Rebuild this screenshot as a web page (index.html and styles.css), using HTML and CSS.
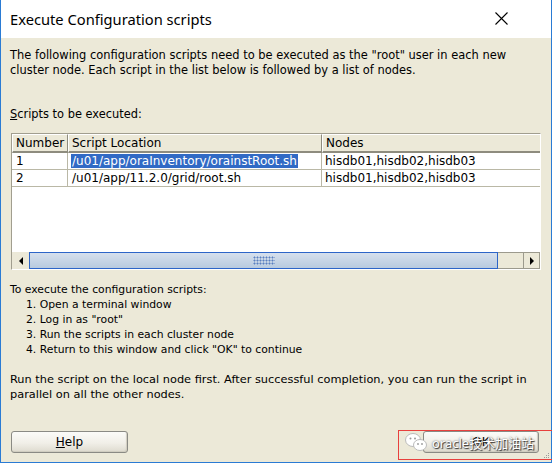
FILE: index.html
```html
<!DOCTYPE html>
<html>
<head>
<meta charset="utf-8">
<link rel="stylesheet" href="styles.css">
</head>
<body>
<div class="window">
  <div class="titlebar">
    <span class="title">Execute Configuration scripts</span>
    <svg class="close" width="13" height="13" viewBox="0 0 13 13"><path d="M0.5 0.5 L12.5 12.5 M12.5 0.5 L0.5 12.5" stroke="#000" stroke-width="1.1" fill="none"/></svg>
  </div>
  <div class="content">
    <p class="intro">The following configuration scripts need to be executed as the "root" user in each new<br>cluster node. Each script in the list below is followed by a list of nodes.</p>
    <div class="label"><u>S</u>cripts to be executed:</div>
    <div class="frame">
      <div class="grid header">
        <div class="hcell">Number</div>
        <div class="hcell">Script Location</div>
        <div class="hcell last">Nodes</div>
      </div>
      <div class="grid row">
        <div class="cell">1</div>
        <div class="cell loc"><span class="sel">/u01/app/oraInventory/orainstRoot.sh</span></div>
        <div class="cell last">hisdb01,hisdb02,hisdb03</div>
      </div>
      <div class="grid row">
        <div class="cell">2</div>
        <div class="cell loc"><span class="plain">/u01/app/11.2.0/grid/root.sh</span></div>
        <div class="cell last">hisdb01,hisdb02,hisdb03</div>
      </div>
      <div class="empty"></div>
      <div class="hscroll">
        <div class="sbtn"><span class="arrow-left"></span></div>
        <div class="thumb"><span class="grip"></span></div>
        <div class="track"></div>
        <div class="sbtn right"><span class="arrow-right"></span></div>
      </div>
    </div>
    <div class="steps">
      <div>To execute the configuration scripts:</div>
      <div class="item">1. Open a terminal window</div>
      <div class="item">2. Log in as "root"</div>
      <div class="item">3. Run the scripts in each cluster node</div>
      <div class="item">4. Return to this window and click "OK" to continue</div>
    </div>
    <p class="note">Run the script on the local node first. After successful completion, you can run the script in<br>parallel on all the other nodes.</p>
    <div class="buttons">
      <button class="btn"><u>H</u>elp</button>
      <button class="btn ok">OK</button>
    </div>
  </div>
  <svg class="resize" width="8" height="8" viewBox="0 0 8 8">
    <rect x="6" y="0" width="1" height="1" fill="#9a9a9a"/>
    <rect x="4" y="2" width="1" height="1" fill="#9a9a9a"/>
    <rect x="6" y="2" width="1" height="1" fill="#9a9a9a"/>
    <rect x="2" y="4" width="1" height="1" fill="#9a9a9a"/>
    <rect x="4" y="4" width="1" height="1" fill="#9a9a9a"/>
    <rect x="6" y="4" width="1" height="1" fill="#9a9a9a"/>
    <rect x="0" y="6" width="1" height="1" fill="#9a9a9a"/>
    <rect x="2" y="6" width="1" height="1" fill="#9a9a9a"/>
    <rect x="4" y="6" width="1" height="1" fill="#9a9a9a"/>
    <rect x="6" y="6" width="1" height="1" fill="#9a9a9a"/>
  </svg>
</div>
<div class="watermark">
  <svg class="wechat" width="24" height="20" viewBox="0 0 24 20">
    <ellipse cx="9" cy="8" rx="7.5" ry="6.5" fill="#fff" stroke="#bbb" stroke-width="1"/>
    <circle cx="6.5" cy="6.5" r="1" fill="#999"/>
    <circle cx="11" cy="6.5" r="1" fill="#999"/>
    <ellipse cx="16" cy="13" rx="6.5" ry="5.5" fill="#fff" stroke="#bbb" stroke-width="1"/>
    <circle cx="14" cy="12" r="0.9" fill="#999"/>
    <circle cx="18" cy="12" r="0.9" fill="#999"/>
  </svg>
  <span class="wm-text">oracle技术加油站</span>
</div>
</body>
</html>
```
FILE: styles.css
```css
* { box-sizing: border-box; }
html, body { margin: 0; padding: 0; }
body {
  width: 552px;
  height: 464px;
  overflow: hidden;
  background: #ffffff;
  font-family: "DejaVu Sans", sans-serif;
  color: #000;
  position: relative;
}
.window {
  width: 552px;
  height: 463px;
  border: 1px solid #2a7bd4;
  border-top: none;
  background: #ece9d8;
  display: flex;
  flex-direction: column;
  position: relative;
}
.titlebar {
  height: 38px;
  flex: none;
  background: #fff;
  display: flex;
  align-items: center;
  justify-content: space-between;
  padding: 0 43px 1px 9px;
}
.title {
  font-family: "Noto Sans", sans-serif;
  font-size: 14.7px;
  color: #000;
}
.close { display: block; }
.content {
  flex: 1;
  display: flex;
  flex-direction: column;
  padding: 10px 9px 0 9px;
  font-size: 11px;
  line-height: 15px;
}
.intro { margin: 0; font-size: 11.45px; }
.label { margin-top: 29px; font-size: 11.4px; }
.frame {
  margin-top: 11px;
  margin-left: 1px;
  width: 530px;
  height: 137px;
  border-top: 1px solid #a19e8f;
  border-left: 1px solid #a19e8f;
  border-right: 1px solid #fff;
  border-bottom: 1px solid #fff;
  background: #fff;
  display: flex;
  flex-direction: column;
  font-size: 12px;
}
.grid {
  display: grid;
  grid-template-columns: 56px 254px 218px;
  flex: none;
}
.header { height: 19px; background: #ece9d8; }
.hcell {
  border-top: 1px solid #fff;
  border-left: 1px solid #fff;
  border-right: 1px solid #8e8c7e;
  border-bottom: 2px solid #8e8c7e;
  padding: 1px 0 0 3px;
  line-height: 15px;
  white-space: nowrap;
  overflow: hidden;
}
.hcell.last { border-right: none; }
.row { height: 17px; }
.cell {
  border-right: 1px solid #bab8a6;
  border-bottom: 1px solid #bab8a6;
  padding: 1px 0 0 4px;
  line-height: 15px;
  white-space: nowrap;
  overflow: hidden;
}
.cell.loc { padding-left: 3px; }
.cell.last { border-right: none; padding-left: 3px; }
.sel { background: #316ac5; color: #fff; padding: 0 1px; }
.plain { padding: 0 1px; }
.empty { flex: 1; background: #fff; }
.hscroll {
  height: 17px;
  flex: none;
  display: flex;
  background: #ece9d8;
}
.sbtn {
  width: 17px;
  flex: none;
  background: #ece9d8;
  display: flex;
  align-items: center;
  justify-content: center;
}
.sbtn.right { border: 1px solid #9c9a8d; }
.arrow-left {
  width: 0; height: 0;
  border-top: 4px solid transparent;
  border-bottom: 4px solid transparent;
  border-right: 4px solid #000;
}
.arrow-right {
  width: 0; height: 0;
  border-top: 4px solid transparent;
  border-bottom: 4px solid transparent;
  border-left: 4px solid #000;
}
.thumb {
  width: 469px;
  flex: none;
  border: 1px solid #2d65c8;
  background: linear-gradient(#d6e0ed, #b8cadf);
  display: flex;
  align-items: center;
  justify-content: center;
}
.grip {
  width: 22px;
  height: 9px;
  background-image: radial-gradient(circle, #5a7fc0 0.9px, transparent 1.1px);
  background-size: 3px 3px;
}
.track {
  flex: 1;
  border-top: 1px solid #9c9a8d;
  border-bottom: 1px solid #9c9a8d;
  background: #ece9d8;
}
.steps { margin-top: 12px; font-size: 10.8px; }
.steps .item { padding-left: 16px; }
.note { margin: 15px 0 0 0; font-size: 11.35px; }
.buttons {
  margin-top: 29px;
  display: flex;
  justify-content: space-between;
  padding: 0 3px 0 1px;
}
.btn {
  width: 117px;
  height: 22px;
  border: 1px solid #8a8a84;
  border-radius: 3px;
  background: linear-gradient(#fbfbf8 0%, #f1efe8 55%, #dedbcf 100%);
  box-shadow: inset -1px -1px 1px #d0ccbf;
  font-family: "DejaVu Sans", sans-serif;
  font-size: 12px;
  color: #000;
  padding: 0;
  line-height: 18px;
}
.btn.ok { width: 116px; }
.resize { position: absolute; right: 1px; bottom: 1px; }
.watermark {
  position: absolute;
  left: 398px;
  top: 430px;
  width: 170px;
  height: 30px;
  border: 1px solid #e8403d;
  display: flex;
  align-items: center;
  padding-left: 5px;
  gap: 9px;
}
.wechat { display: block; margin-top: -6px; }
.wm-text {
  font-family: "Noto Sans", "Noto Sans CJK SC", sans-serif;
  font-size: 13px;
  line-height: 16px;
  color: #fff;
  text-shadow: 1px 1px 1px #333, 0 0 2px #555;
  white-space: nowrap;
  margin-left: -5px;
  margin-bottom: 5px;
}
```
